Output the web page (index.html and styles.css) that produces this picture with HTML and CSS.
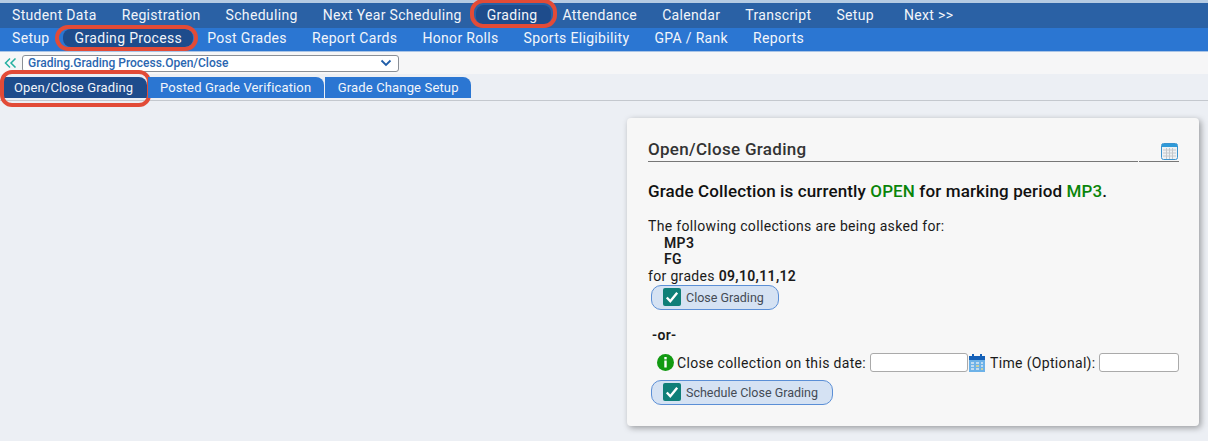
FILE: index.html
```
<!DOCTYPE html>
<html lang="en">
<head>
<meta charset="utf-8">
<title>Open/Close Grading</title>
<link rel="stylesheet" href="styles.css">
</head>
<body>
<nav class="topnav">
  <a class="nav-item">Student Data</a>
  <a class="nav-item">Registration</a>
  <a class="nav-item">Scheduling</a>
  <a class="nav-item">Next Year Scheduling</a>
  <a class="nav-item active ringed">Grading</a>
  <a class="nav-item">Attendance</a>
  <a class="nav-item">Calendar</a>
  <a class="nav-item">Transcript</a>
  <a class="nav-item">Setup</a>
  <a class="nav-item next">Next &gt;&gt;</a>
</nav>
<nav class="subnav">
  <a class="nav-item">Setup</a>
  <a class="nav-item active ringed">Grading Process</a>
  <a class="nav-item">Post Grades</a>
  <a class="nav-item">Report Cards</a>
  <a class="nav-item">Honor Rolls</a>
  <a class="nav-item">Sports Eligibility</a>
  <a class="nav-item">GPA / Rank</a>
  <a class="nav-item">Reports</a>
</nav>
<div class="crumbs">
  <svg class="chev" width="13" height="10" viewBox="0 0 13 10"><path d="M6 .5 1.500 5 6 9.500M11.500 .5 7 5l4.500 4.500" fill="none" stroke="#25b0a0" stroke-width="1.500"/></svg>
  <div class="select">
    <span>Grading.Grading Process.Open/Close</span>
    <svg width="12" height="8" viewBox="0 0 12 8"><path d="M1.500 1.500 6 6l4.500-4.500" fill="none" stroke="#1f5da8" stroke-width="1.800"/></svg>
  </div>
</div>
<div class="tabs">
  <a class="tab current">Open/Close Grading</a>
  <a class="tab second">Posted Grade Verification</a>
  <a class="tab">Grade Change Setup</a>
</div>
<main class="content">
  <section class="card">
    <header class="card-head">
      <h2>Open/Close Grading</h2>
      <div class="icon-cell">
        <svg width="17" height="17" viewBox="0 0 17 17">
          <rect x="0.500" y="0.500" width="16" height="16" rx="2" fill="#eef1f3" stroke="#3a93cf"/>
          <rect x="1" y="1" width="15" height="3" fill="#2f9ad8"/>
          <path d="M2 7h13M2 10h13M2 13h13M5.500 5v11M8.500 5v11M11.500 5v11" stroke="#c4c8cc" stroke-width="1"/>
        </svg>
      </div>
    </header>
    <p class="status">Grade Collection is currently <span class="ok">OPEN</span> for marking period <span class="ok">MP3</span>.</p>
    <div class="collections">
      <div>The following collections are being asked for:</div>
      <div class="coll"><b>MP3</b></div>
      <div class="coll"><b>FG</b></div>
      <div>for grades <b>09,10,11,12</b></div>
    </div>
    <button class="btn" type="button">
      <svg width="18" height="18" viewBox="0 0 18 18"><rect width="18" height="18" rx="2" fill="#0f7f78"/><path d="M3.800 9.500 7.300 13.200 14.200 4.800" fill="none" stroke="#fff" stroke-width="2.400"/></svg>
      Close Grading
    </button>
    <div class="or">-or-</div>
    <div class="date-row">
      <svg class="info" width="17" height="17" viewBox="0 0 17 17"><circle cx="8.500" cy="8.500" r="8.500" fill="#129a12"/><rect x="7.300" y="3" width="2.400" height="2.400" fill="#fff"/><rect x="7.300" y="6.500" width="2.400" height="7" fill="#fff"/></svg>
      <label>Close collection on this date:</label>
      <input class="date-input" type="text" aria-label="Close date">
      <svg class="cal" width="16" height="18" viewBox="0 0 16 18"><rect y="2" width="16" height="16" fill="#6db2e8"/><rect y="2" width="16" height="4" fill="#1560b8"/><rect x="3" y="0" width="2" height="4" fill="#1560b8"/><rect x="11" y="0" width="2" height="4" fill="#1560b8"/><path d="M2 9h3M7 9h3M12 9h2M2 12h3M12 12h2M2 15h3M7 15h3" stroke="#dbe9f4" stroke-width="1.500"/><path d="M7 12h3M12 15h2" stroke="#e8d98a" stroke-width="1.500"/></svg>
      <label class="time-label">Time (Optional):</label>
      <input class="time-input" type="text" aria-label="Time">
    </div>
    <button class="btn wide" type="button">
      <svg width="18" height="18" viewBox="0 0 18 18"><rect width="18" height="18" rx="2" fill="#0f7f78"/><path d="M3.800 9.500 7.300 13.200 14.200 4.800" fill="none" stroke="#fff" stroke-width="2.400"/></svg>
      Schedule Close Grading
    </button>
  </section>
</main>
</body>
</html>
```
FILE: styles.css
```
* { box-sizing: border-box; }
html, body { margin: 0; height: 441px; overflow: hidden; }
body {
  background: #eceff4;
  font-family: Roboto, "Liberation Sans", sans-serif;
  font-size: 14px;
  color: #1a1a1a;
}
.topnav, .subnav {
  display: flex;
  align-items: center;
  color: #f2f5fa;
  letter-spacing: 0.33px;
}
.topnav {
  height: 28px;
  padding: 0 0 1px 5px;
  background: #2a61a5;
  border-top: 3px solid #b5cbe3;
  gap: 11px;
}
.subnav {
  height: 24px;
  padding: 0 0 3px 5px;
  background: #2b76d2;
  border-bottom: 1px solid #a9c4e6;
  gap: 11px;
}
.nav-item { padding: 1px 7px; white-space: nowrap; position: relative; }
.next { margin-left: 5px; }
.active { background: #1e4c8c; border-radius: 8px; }
.ringed::after {
  content: "";
  position: absolute;
  border: 4px solid #e24b37;
  border-radius: 13px;
}
.topnav .active { padding: 2px 13px 2px 11px; margin: 0 -6px 0 -4px; }
.topnav .ringed::after { inset: -6px -6px -3px -6px; }
.subnav .active { padding: 1px 11px 1px 12px; margin: 0 -4px 0 -5px; }
.subnav .ringed::after { inset: -4px -5px -4px -8px; }
.crumbs {
  height: 22px;
  background: #f6f6f7;
  display: flex;
  align-items: center;
  padding: 0 0 0 4px;
  gap: 5px;
}
.select {
  width: 377px;
  height: 17px;
  background: #fff;
  border: 1px solid #8a8f96;
  border-radius: 3px;
  display: flex;
  align-items: center;
  justify-content: space-between;
  padding: 0 6px 0 5px;
  color: #2a66b0;
  font-size: 12px;
  font-weight: 500;
}
.tabs {
  height: 27px;
  padding: 3px 0 0 3px;
  display: flex;
  gap: 1px;
  border-bottom: 1px solid #c4c8ce;
}
.tab {
  height: 21px;
  padding: 3px 12.500px 0;
  background: #2b76d2;
  color: #f2f5fa;
  border-radius: 0 8px 0 0;
  font-size: 13px;
  letter-spacing: 0.15px;
  white-space: nowrap;
  position: relative;
}
.second { padding: 3px 13px 0 12px; }
.current { background: #1e4c8c; width: 144px; padding-left: 11px; }
.current::after {
  content: "";
  position: absolute;
  inset: -7px -4px -9px -3px;
  border: 4px solid #e24b37;
  border-radius: 12px;
}
.content { display: flex; justify-content: flex-end; padding: 17px 9px 0 0; }
.card {
  width: 572px;
  height: 308px;
  background: #f7f7f7;
  border-radius: 4px;
  box-shadow: 2px 2px 6px rgba(0,0,0,.35);
  padding: 22px 20px 0 21px;
}
.card-head {
  display: flex;
  align-items: stretch;
  gap: 1px;
  height: 22px;
}
.card-head h2 {
  flex: 1;
  margin: 0;
  padding-bottom: 2px;
  font-size: 17px;
  font-weight: 500;
  color: #333;
  letter-spacing: .3px;
  line-height: 19px;
  border-bottom: 1px solid #777;
}
.icon-cell {
  width: 40px;
  display: flex;
  justify-content: flex-end;
  align-items: flex-end;
  padding: 0 1px 1px 0;
  border-bottom: 1px solid #777;
}
.status { margin: 20px 0 0; font-size: 17px; font-weight: 500; color: #111; letter-spacing: .12px; line-height: 19px; }
.ok { color: #0a850a; }
.collections { margin-top: 17px; line-height: 16.670px; letter-spacing: .33px; }
.coll { padding-left: 16px; }
b { font-weight: 600; }
.btn {
  display: flex;
  align-items: center;
  gap: 5px;
  height: 25px;
  margin: 0 0 0 3px;
  padding: 0 14px 0 11px;
  background: #d5e2f3;
  border: 1px solid #5b8fd6;
  border-radius: 10px;
  font: 12.500px Roboto, sans-serif;
  color: #444b55;
}
.or { margin: 17px 0 0 4px; font-weight: 600; line-height: 17px; letter-spacing: .33px; }
.date-row { display: flex; align-items: center; height: 22px; margin: 8px 0 0 9px; letter-spacing: .33px; white-space: nowrap; }
.date-row label { margin-left: 3px; }
.date-input, .time-input { height: 19px; background: #fff; border: 1px solid #aaa; border-radius: 3px; padding: 0; }
.date-input { width: 98px; margin-left: 4px; }
.cal { margin-left: 1px; }
.date-row .time-label { margin-left: 5px; }
.time-input { width: 80px; margin-left: 3px; }
.btn.wide { margin-top: 6px; }
```
